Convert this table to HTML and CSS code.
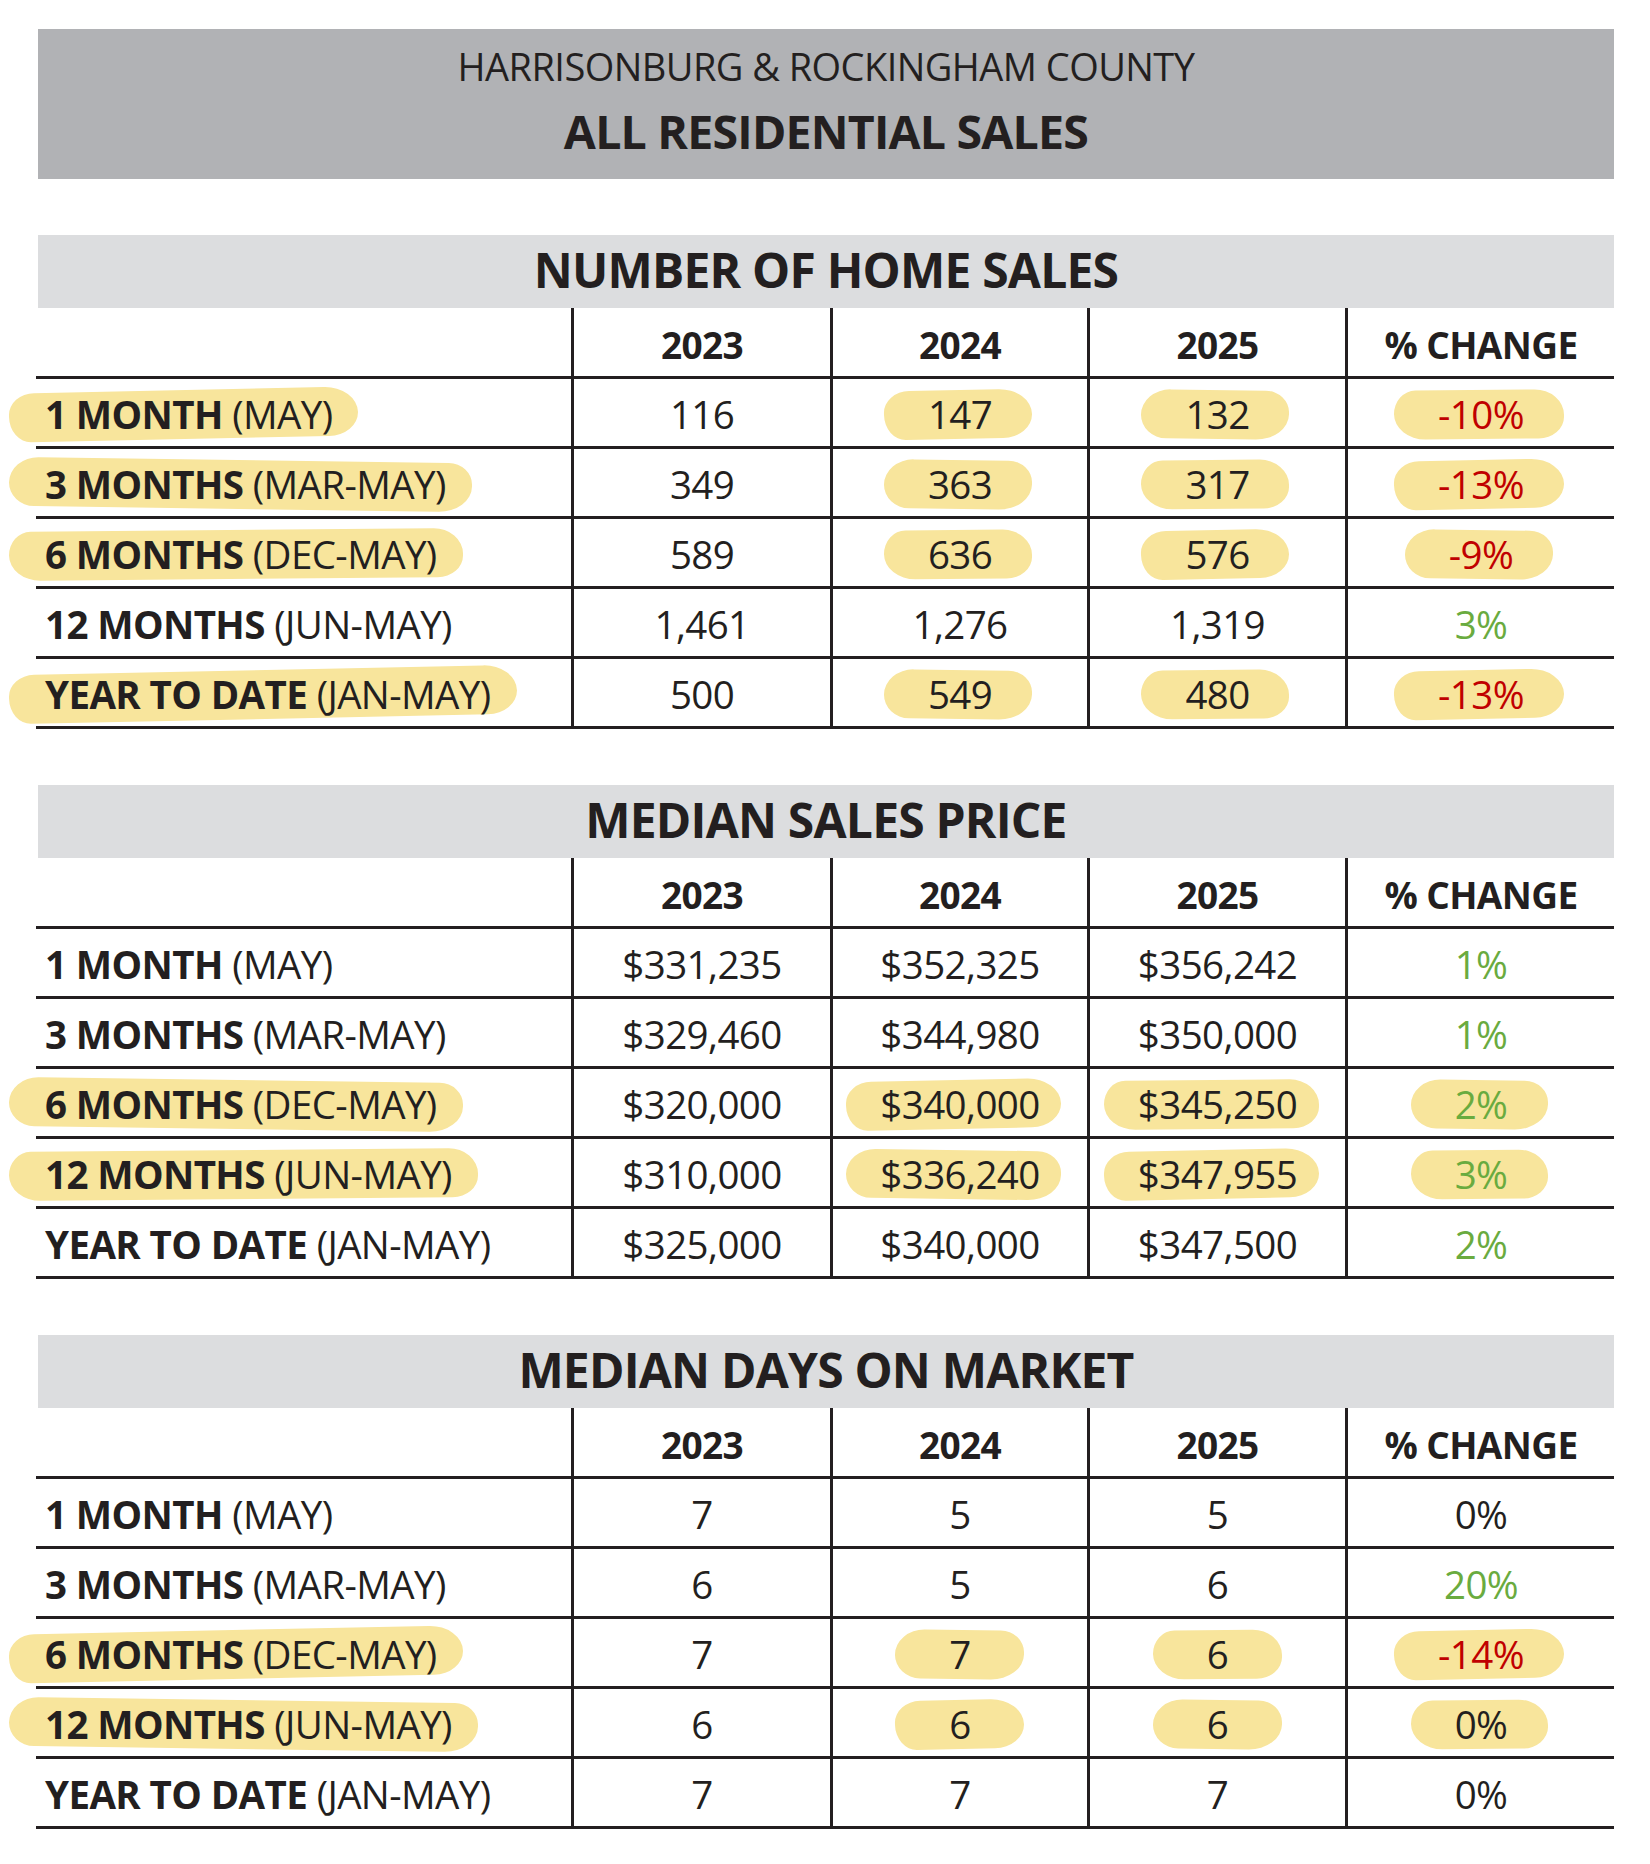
FILE: index.html
```html
<!DOCTYPE html>
<html lang="en">
<head>
<meta charset="utf-8">
<title>All Residential Sales</title>
<link rel="stylesheet" href="styles.css">
</head>
<body>
<div class="page">
  <header class="banner">
    <div class="banner-sub">HARRISONBURG &amp; ROCKINGHAM COUNTY</div>
    <div class="banner-title">ALL RESIDENTIAL SALES</div>
  </header>

  <section class="table">
    <div class="band">NUMBER OF HOME SALES</div>
    <div class="row head">
      <div class="cell label"></div>
      <div class="cell">2023</div><div class="cell">2024</div><div class="cell">2025</div><div class="cell">% CHANGE</div>
    </div>
    <div class="row">
      <div class="cell label"><span class="txt hl hl-label hl-a"><b>1 MONTH</b> (MAY)</span></div>
      <div class="cell">116</div>
      <div class="cell"><span class="hl hl-a">147</span></div>
      <div class="cell"><span class="hl hl-b">132</span></div>
      <div class="cell red"><span class="hl hl-c">-10%</span></div>
    </div>
    <div class="row">
      <div class="cell label"><span class="txt hl hl-label hl-b"><b>3 MONTHS</b> (MAR-MAY)</span></div>
      <div class="cell">349</div>
      <div class="cell"><span class="hl hl-b">363</span></div>
      <div class="cell"><span class="hl hl-c">317</span></div>
      <div class="cell red"><span class="hl hl-a">-13%</span></div>
    </div>
    <div class="row">
      <div class="cell label"><span class="txt hl hl-label hl-c"><b>6 MONTHS</b> (DEC-MAY)</span></div>
      <div class="cell">589</div>
      <div class="cell"><span class="hl hl-c">636</span></div>
      <div class="cell"><span class="hl hl-a">576</span></div>
      <div class="cell red"><span class="hl hl-b">-9%</span></div>
    </div>
    <div class="row">
      <div class="cell label"><span class="txt"><b>12 MONTHS</b> (JUN-MAY)</span></div>
      <div class="cell">1,461</div>
      <div class="cell">1,276</div>
      <div class="cell">1,319</div>
      <div class="cell green">3%</div>
    </div>
    <div class="row">
      <div class="cell label"><span class="txt hl hl-label hl-a"><b>YEAR TO DATE</b> (JAN-MAY)</span></div>
      <div class="cell">500</div>
      <div class="cell"><span class="hl hl-b">549</span></div>
      <div class="cell"><span class="hl hl-c">480</span></div>
      <div class="cell red"><span class="hl hl-a">-13%</span></div>
    </div>
  </section>

  <section class="table">
    <div class="band">MEDIAN SALES PRICE</div>
    <div class="row head">
      <div class="cell label"></div>
      <div class="cell">2023</div><div class="cell">2024</div><div class="cell">2025</div><div class="cell">% CHANGE</div>
    </div>
    <div class="row">
      <div class="cell label"><span class="txt"><b>1 MONTH</b> (MAY)</span></div>
      <div class="cell">$331,235</div>
      <div class="cell">$352,325</div>
      <div class="cell">$356,242</div>
      <div class="cell green">1%</div>
    </div>
    <div class="row">
      <div class="cell label"><span class="txt"><b>3 MONTHS</b> (MAR-MAY)</span></div>
      <div class="cell">$329,460</div>
      <div class="cell">$344,980</div>
      <div class="cell">$350,000</div>
      <div class="cell green">1%</div>
    </div>
    <div class="row">
      <div class="cell label"><span class="txt hl hl-label hl-b"><b>6 MONTHS</b> (DEC-MAY)</span></div>
      <div class="cell">$320,000</div>
      <div class="cell"><span class="hl hl-money hl-a">$340,000</span></div>
      <div class="cell"><span class="hl hl-money hl-c">$345,250</span></div>
      <div class="cell green"><span class="hl hl-b">2%</span></div>
    </div>
    <div class="row">
      <div class="cell label"><span class="txt hl hl-label hl-c"><b>12 MONTHS</b> (JUN-MAY)</span></div>
      <div class="cell">$310,000</div>
      <div class="cell"><span class="hl hl-money hl-b">$336,240</span></div>
      <div class="cell"><span class="hl hl-money hl-a">$347,955</span></div>
      <div class="cell green"><span class="hl hl-c">3%</span></div>
    </div>
    <div class="row">
      <div class="cell label"><span class="txt"><b>YEAR TO DATE</b> (JAN-MAY)</span></div>
      <div class="cell">$325,000</div>
      <div class="cell">$340,000</div>
      <div class="cell">$347,500</div>
      <div class="cell green">2%</div>
    </div>
  </section>

  <section class="table">
    <div class="band">MEDIAN DAYS ON MARKET</div>
    <div class="row head">
      <div class="cell label"></div>
      <div class="cell">2023</div><div class="cell">2024</div><div class="cell">2025</div><div class="cell">% CHANGE</div>
    </div>
    <div class="row">
      <div class="cell label"><span class="txt"><b>1 MONTH</b> (MAY)</span></div>
      <div class="cell">7</div>
      <div class="cell">5</div>
      <div class="cell">5</div>
      <div class="cell">0%</div>
    </div>
    <div class="row">
      <div class="cell label"><span class="txt"><b>3 MONTHS</b> (MAR-MAY)</span></div>
      <div class="cell">6</div>
      <div class="cell">5</div>
      <div class="cell">6</div>
      <div class="cell green">20%</div>
    </div>
    <div class="row">
      <div class="cell label"><span class="txt hl hl-label hl-a"><b>6 MONTHS</b> (DEC-MAY)</span></div>
      <div class="cell">7</div>
      <div class="cell"><span class="hl hl-wide hl-b">7</span></div>
      <div class="cell"><span class="hl hl-wide hl-c">6</span></div>
      <div class="cell red"><span class="hl hl-a">-14%</span></div>
    </div>
    <div class="row">
      <div class="cell label"><span class="txt hl hl-label hl-b"><b>12 MONTHS</b> (JUN-MAY)</span></div>
      <div class="cell">6</div>
      <div class="cell"><span class="hl hl-wide hl-a">6</span></div>
      <div class="cell"><span class="hl hl-wide hl-b">6</span></div>
      <div class="cell"><span class="hl hl-c">0%</span></div>
    </div>
    <div class="row">
      <div class="cell label"><span class="txt"><b>YEAR TO DATE</b> (JAN-MAY)</span></div>
      <div class="cell">7</div>
      <div class="cell">7</div>
      <div class="cell">7</div>
      <div class="cell">0%</div>
    </div>
  </section>
</div>
</body>
</html>
```

FILE: styles.css
```css
* { box-sizing: border-box; }

html, body {
  margin: 0;
  padding: 0;
  background: #ffffff;
}

body {
  font-family: "Open Sans", "Liberation Sans", sans-serif;
  color: #231f20;
}

.page {
  width: 1650px;
  padding: 29px 36px 0 36px;
}

.banner {
  margin-left: 2px;
  height: 150px;
  background: #b1b2b5;
  padding-top: 18px;
  display: flex;
  flex-direction: column;
  align-items: center;
}

.banner-sub {
  font-size: 38px;
  line-height: 38px;
  font-weight: 400;
  letter-spacing: -0.55px;
}

.banner-title {
  margin-top: 23px;
  font-size: 46.5px;
  line-height: 46px;
  font-weight: 700;
  letter-spacing: -0.8px;
}

.table {
  margin-top: 56px;
}

.band {
  margin-left: 2px;
  height: 73px;
  background: #dcdddf;
  display: flex;
  align-items: center;
  justify-content: center;
  font-size: 48px;
  font-weight: 700;
  letter-spacing: -0.8px;
  padding-bottom: 5px;
}

.row {
  display: grid;
  grid-template-columns: 535px 259px 257px 258px 1fr;
  height: 70px;
  border-bottom: 3px solid #231f20;
  font-size: 38.5px;
}

.row.head {
  height: 71px;
  font-weight: 700;
  font-size: 37px;
}

.cell {
  display: flex;
  align-items: center;
  justify-content: center;
  border-left: 3px solid #231f20;
  padding-top: 3px;
  letter-spacing: -0.6px;
  white-space: nowrap;
}

.row.head .cell {
  padding-top: 5px;
}

.cell.label {
  border-left: none;
  justify-content: flex-start;
  padding-left: 9px;
}

.txt {
  white-space: pre;
}

.cell b {
  font-weight: 700;
}

.red { color: #c00000; }
.green { color: #6aab3f; }

/* highlighter marks */
.hl {
  position: relative;
  isolation: isolate;
  line-height: 1;
}

.hl::before {
  content: "";
  position: absolute;
  z-index: -1;
  top: -5px;
  bottom: -5px;
  left: -44px;
  right: -40px;
  background: #f8e59c;
}

.hl-label::before {
  left: -36px;
  right: -26px;
}

.hl-money::before {
  left: -34px;
  right: -22px;
}

.hl-wide::before {
  left: -54px;
  right: -54px;
}

.hl-a::before {
  border-radius: 26px 34px 30px 22px / 22px 26px 24px 26px;
  transform: rotate(-1.2deg);
}

.hl-b::before {
  border-radius: 30px 24px 34px 26px / 26px 22px 26px 24px;
  transform: rotate(0.8deg);
}

.hl-c::before {
  border-radius: 22px 30px 26px 32px / 24px 26px 22px 26px;
  transform: rotate(-0.5deg);
}
```
